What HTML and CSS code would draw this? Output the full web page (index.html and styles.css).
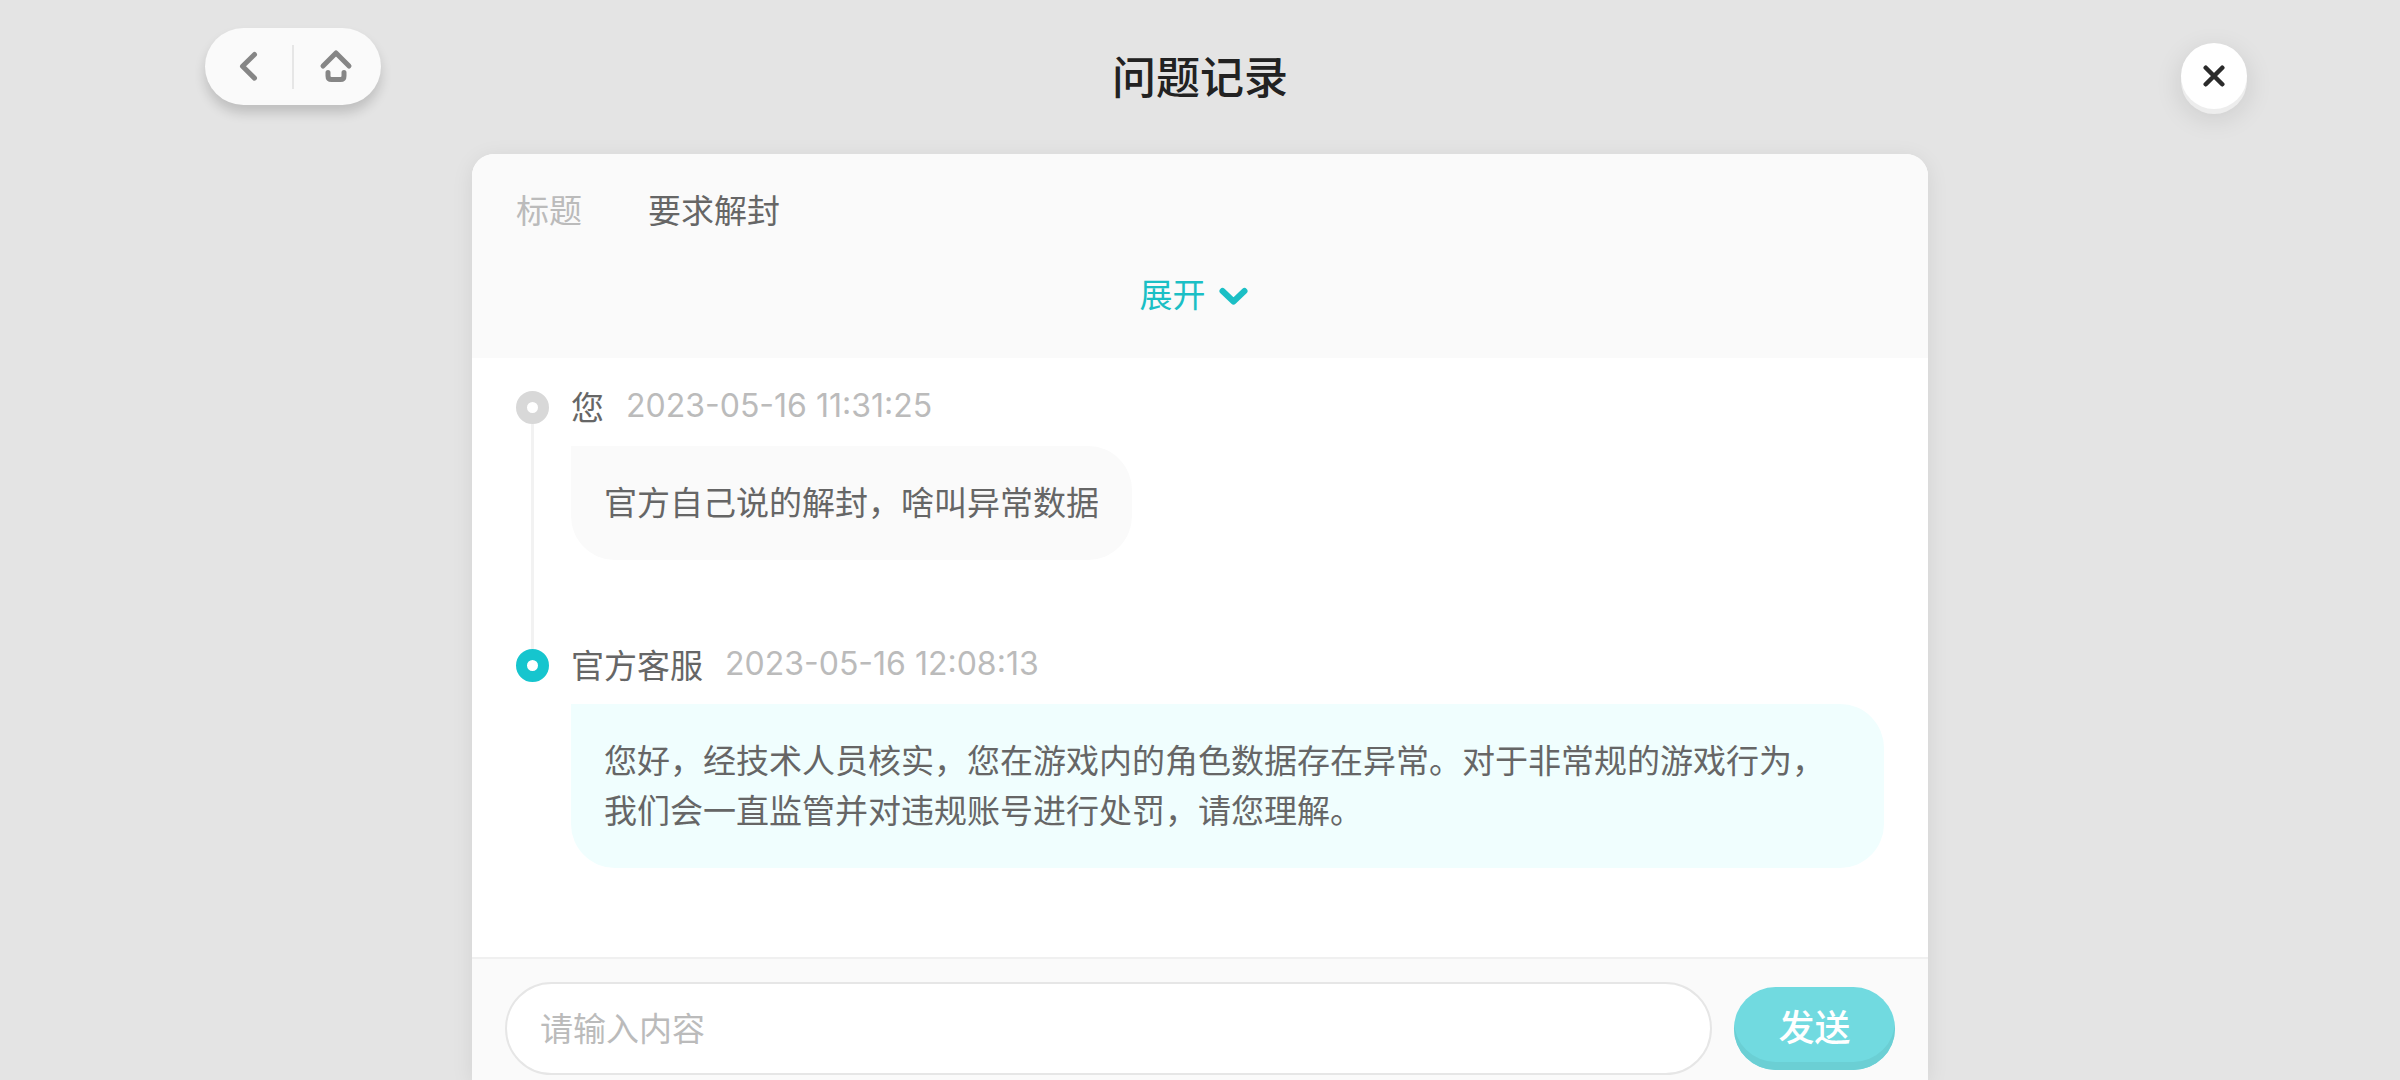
FILE: index.html
```html
<!DOCTYPE html>
<html lang="zh-CN">
<head>
<meta charset="utf-8">
<meta name="viewport" content="width=device-width, initial-scale=1">
<title>问题记录</title>
<link rel="stylesheet" href="styles.css">
</head>
<body>
<div class="app">
  <header class="topbar">
    <nav class="nav-pill" aria-label="导航">
      <button class="nav-button" type="button" aria-label="返回">
        <svg class="nav-icon" viewBox="0 0 44 44" aria-hidden="true"><path d="M27.500 9.500 15.500 21.300l12 11.800"/></svg>
      </button>
      <button class="nav-button" type="button" aria-label="首页">
        <svg class="nav-icon" viewBox="0 0 44 44" aria-hidden="true"><path d="M9 21 22 8l13 13"/><path d="M14 27.500v3.500q0 3.500 3.500 3.500h9q3.500 0 3.500-3.500v-3.500"/></svg>
      </button>
    </nav>
    <h1 class="page-title">问题记录</h1>
    <button class="close-button" type="button" aria-label="关闭">
      <svg class="close-icon" viewBox="0 0 24 24" aria-hidden="true"><path d="m3 3 18 18M21 3 3 21"/></svg>
    </button>
  </header>

  <main class="card">
    <section class="summary">
      <dl class="field">
        <dt class="field-label">标题</dt>
        <dd class="field-value">要求解封</dd>
      </dl>
      <button class="expand" type="button">展开
        <svg class="expand-icon" viewBox="0 0 44 44" aria-hidden="true"><path d="m11.500 20 11 10.500 11-10.500"/></svg>
      </button>
    </section>

    <ol class="timeline">
      <li class="entry">
        <span class="marker"></span>
        <div class="entry-body">
          <div class="entry-head"><span class="author">您</span><time class="time" datetime="2023-05-16T11:31:25">2023-05-16 11:31:25</time></div>
          <p class="bubble">官方自己说的解封，啥叫异常数据</p>
        </div>
      </li>
      <li class="entry entry-official">
        <span class="marker"></span>
        <div class="entry-body">
          <div class="entry-head"><span class="author">官方客服</span><time class="time" datetime="2023-05-16T12:08:13">2023-05-16 12:08:13</time></div>
          <p class="bubble">您好，经技术人员核实，您在游戏内的角色数据存在异常。对于非常规的游戏行为，我们会一直监管并对违规账号进行处罚，请您理解。</p>
        </div>
      </li>
    </ol>

    <form class="composer">
      <input class="message-input" type="text" placeholder="请输入内容" aria-label="请输入内容">
      <button class="send" type="button">发送</button>
    </form>
  </main>
</div>
</body>
</html>
```

FILE: styles.css
```css
*,
*::before,
*::after {
  box-sizing: border-box;
}

body {
  margin: 0;
  background: #e4e4e4;
  color: #666;
  font-family: "Noto Sans CJK SC", sans-serif;
  font-size: 33px;
  line-height: 50px;
}

button,
input {
  border: 0;
  padding: 0;
  background: none;
  color: inherit;
  font: inherit;
}

button {
  cursor: pointer;
}

svg {
  display: block;
  fill: none;
  stroke: currentColor;
  stroke-linecap: round;
  stroke-linejoin: round;
}

.app {
  display: flex;
  flex-direction: column;
  min-height: 100vh;
}

/* Top bar */
.topbar {
  display: grid;
  grid-template-columns: 1fr auto 1fr;
  align-items: start;
  padding: 28px 153px 32px;
}

.nav-pill {
  display: flex;
  justify-self: start;
  width: 176px;
  height: 77px;
  margin-left: 52px;
  border-radius: 39px;
  background: #fafafa;
  box-shadow: 0 8px 12px rgba(0, 0, 0, 0.16);
}

.nav-button {
  display: flex;
  flex: 1;
  align-items: center;
  justify-content: center;
  color: #868686;
}

.nav-button + .nav-button::before {
  content: "";
  width: 2px;
  height: 44px;
  margin-right: 20px;
  margin-left: -24px;
  background: #e6e6e6;
}

.nav-icon {
  width: 44px;
  height: 44px;
  stroke-width: 5;
}

.page-title {
  margin: 0;
  color: #222;
  font-size: 44px;
  font-weight: 500;
  line-height: 94px;
}

.close-button {
  display: flex;
  align-items: center;
  justify-content: center;
  justify-self: end;
  width: 66px;
  height: 66px;
  margin-top: 15px;
  border-radius: 50%;
  background: #fff;
  box-shadow: 0 5px 0 #ededed, 0 8px 28px rgba(0, 0, 0, 0.12);
  color: #2b2b2b;
}

.close-icon {
  width: 22px;
  height: 22px;
  stroke-width: 5;
}

/* Card */
.card {
  display: flex;
  flex: 1;
  flex-direction: column;
  width: min(100% - 64px, 1456px);
  margin: 0 auto;
  border-radius: 22px 22px 0 0;
  background: #fff;
  box-shadow: 0 4px 22px rgba(0, 0, 0, 0.08);
}

.summary {
  display: flex;
  flex-direction: column;
  gap: 34px;
  padding: 30px 44px 40px;
  border-radius: 22px 22px 0 0;
  background: #fafafa;
}

.field {
  display: flex;
  gap: 66px;
  margin: 0;
}

.field-label {
  color: #bbb;
}

.field-value {
  margin: 0;
}

.expand {
  display: flex;
  align-items: center;
  align-self: center;
  gap: 5px;
  padding-right: 6px;
  color: #1bbfc5;
}

.expand-icon {
  width: 44px;
  height: 44px;
  stroke-width: 6;
}

/* Conversation */
.timeline {
  flex: 1;
  margin: 0;
  padding: 23px 44px 88px;
  list-style: none;
}

.entry {
  display: flex;
  gap: 22px;
}

.marker {
  display: flex;
  flex: none;
  flex-direction: column;
  align-items: center;
  width: 33px;
  margin-top: 10px;
}

.marker::before {
  content: "";
  width: 33px;
  height: 33px;
  border: 11px solid #d8d8d8;
  border-radius: 50%;
}

.entry:not(:last-child) .marker {
  margin-bottom: -10px;
}

.entry:not(:last-child) .marker::after {
  content: "";
  flex: 1;
  width: 3px;
  background: #f2f2f2;
}

.entry-official .marker::before {
  border-color: #16c5ce;
}

.entry-body {
  flex: 1;
}

.entry:not(:last-child) .entry-body {
  padding-bottom: 79px;
}

.entry-head {
  display: flex;
  gap: 22px;
  margin-bottom: 15px;
}

.time {
  color: #bbb;
  font-family: Inter, sans-serif;
  font-size: 32px;
}

.bubble {
  width: fit-content;
  margin: 0;
  padding: 30px 33px 34px;
  border-radius: 0 44px 44px 44px;
  background: #fafafa;
}

.entry-official .bubble {
  background: #f0fefe;
}

/* Composer */
.composer {
  display: flex;
  align-items: center;
  gap: 22px;
  padding: 23px 33px 5px;
  border-top: 2px solid #f0f0f0;
  background: #fafafa;
}

.message-input {
  flex: 1;
  min-width: 0;
  height: 93px;
  padding: 0 33px 4px;
  border: 2px solid #e6e6e6;
  border-radius: 47px;
  background: #fff;
}

.message-input::placeholder {
  color: #bbb;
  opacity: 1;
}

.send {
  width: 161px;
  height: 83px;
  padding-bottom: 8px;
  border-radius: 42px;
  background: #71dae0;
  box-shadow: inset 0 -8px 0 #6bcfd4;
  color: #fff;
  font-size: 36px;
  font-weight: 500;
}
```
